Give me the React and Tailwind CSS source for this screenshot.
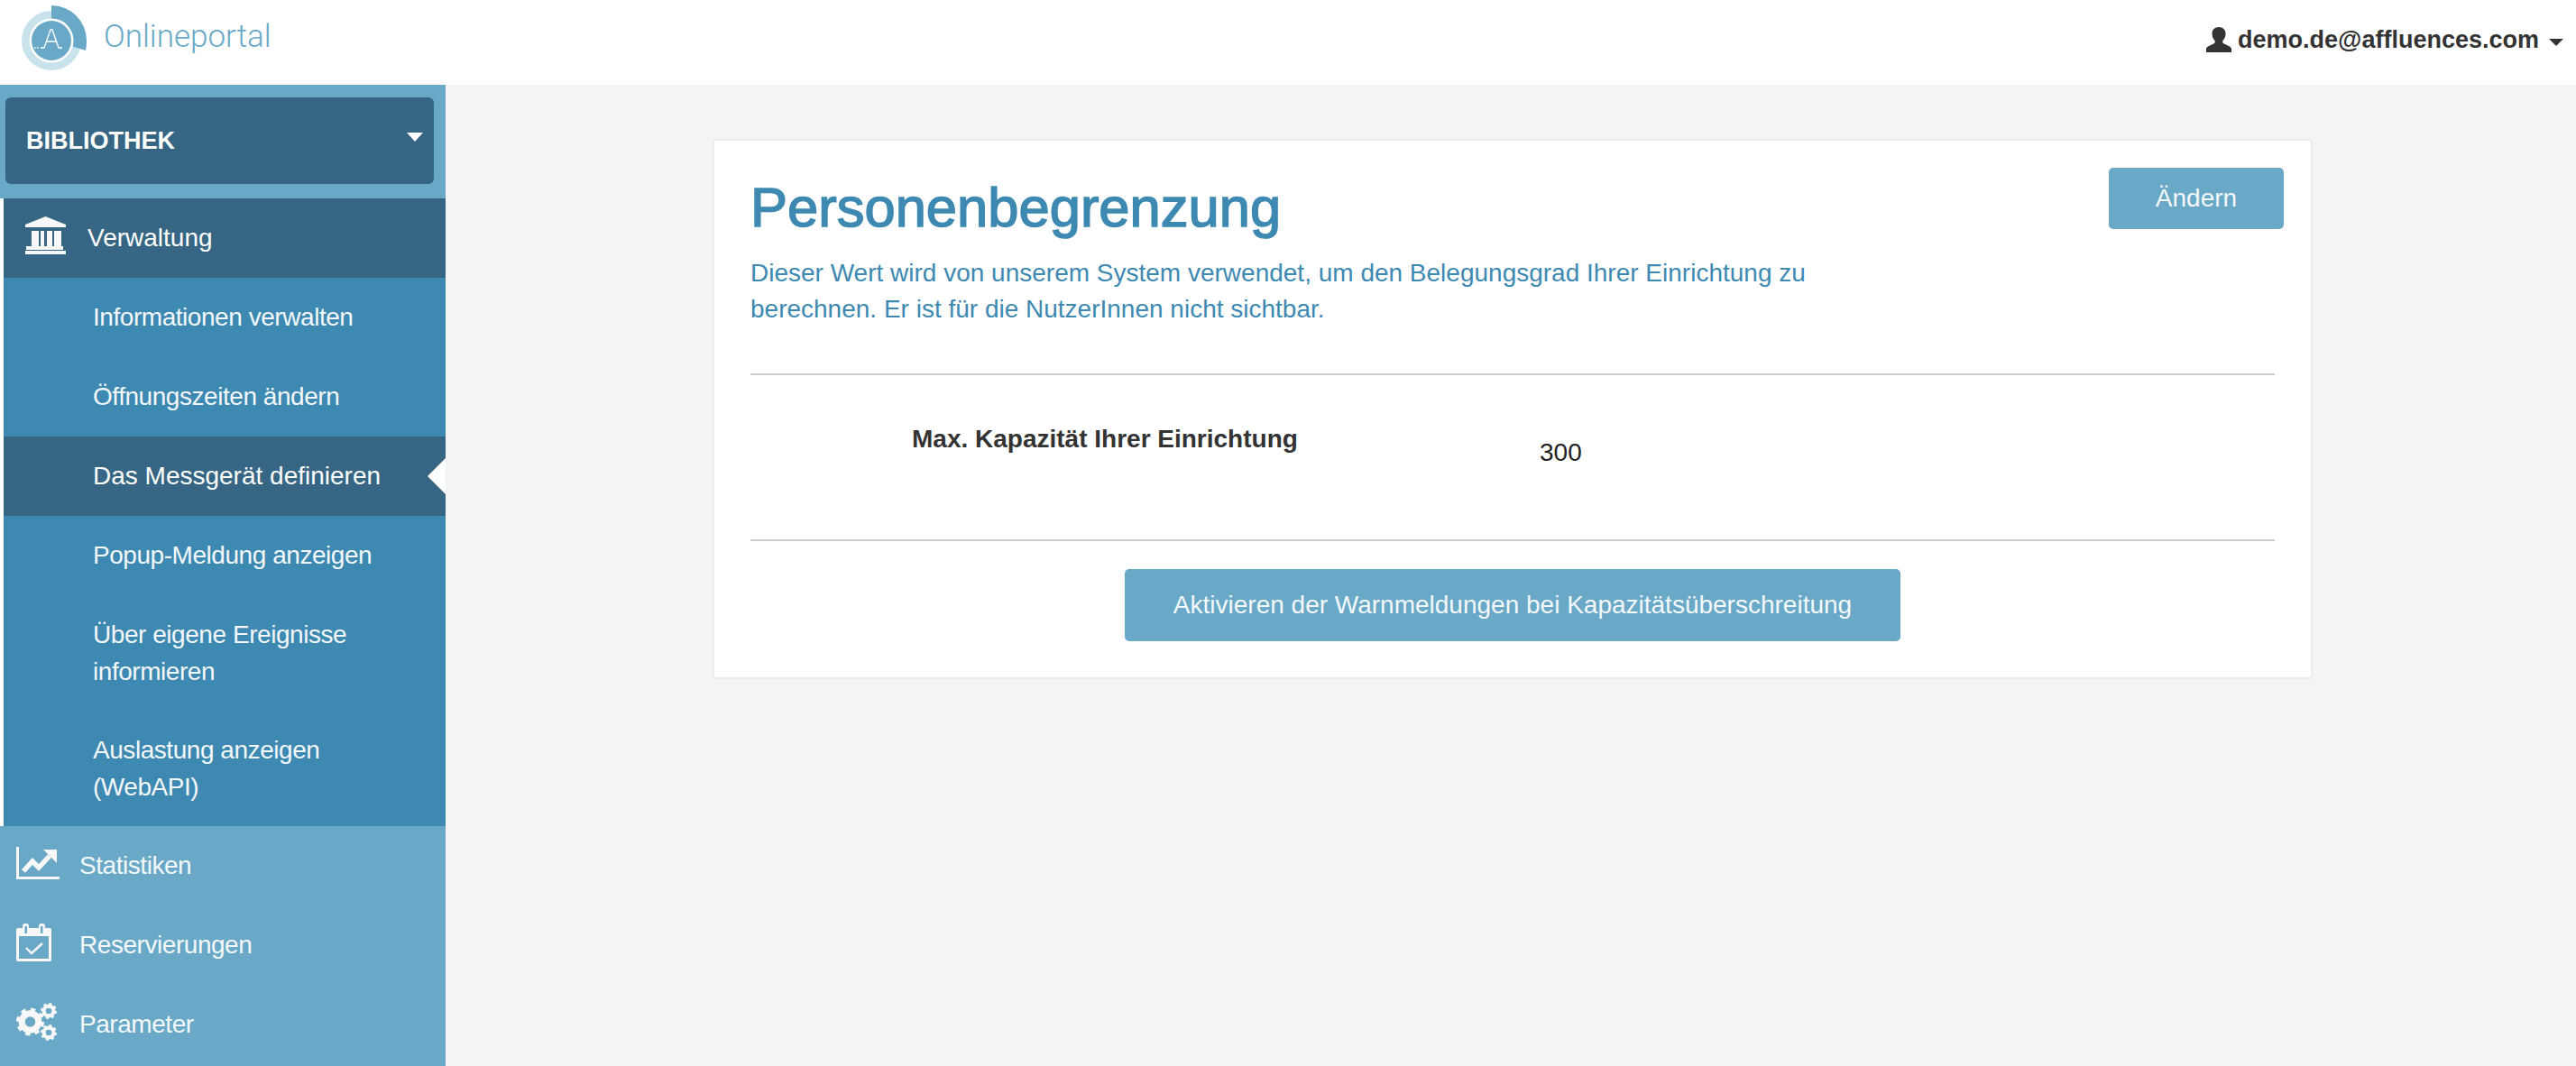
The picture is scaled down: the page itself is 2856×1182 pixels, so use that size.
const sans = "font-['Liberation_Sans',Arial,sans-serif]";
const light = "font-['Roboto',sans-serif] font-light";

function Logo() {
  return (
    <svg width="74" height="74" viewBox="0 0 74 74" className="ml-[24px] mt-[6px] shrink-0">
      <circle cx="33" cy="39" r="28.5" fill="none" stroke="#c9e3ed" strokeWidth="9" />
      <path d="M33 0 A39 39 0 0 1 72 39 Q72 45 71 50 L52 44 L33 15 Z" fill="#69a9c7" />
      <circle cx="33" cy="39" r="24.5" fill="#fff" />
      <circle cx="33" cy="39" r="22" fill="#69a9c7" />
      <path d="M21 47 H25 L32 27 H34 L41 47 H45 M27 40 H39" fill="none" stroke="#fff" strokeWidth="1.3" />
      <path d="M14 47 h1.6 M17 47 h1.6" stroke="#fff" strokeWidth="1.4" />
    </svg>
  );
}

function UserIcon() {
  return (
    <svg width="28" height="28" viewBox="0 0 28 28" className="shrink-0">
      <path d="M0 28 V24 C1 21 6 20 9 18 C10 17 10 16 9.5 15 C7.5 13 6.5 10 6.5 7 C6.5 3 9.5 0 14 0 C18.5 0 21.5 3 21.5 7 C21.5 10 20.5 13 18.5 15 C18 16 18 17 19 18 C22 20 27 21 28 24 V28 Z" fill="#333" />
    </svg>
  );
}

function BankIcon() {
  return (
    <svg width="46" height="42" viewBox="0 0 46 42" className="shrink-0">
      <path d="M22.5 0 L45 9 V12 H0 V9 Z" fill="#f8f8f8" />
      <path d="M7 16 H15 V33 H7 Z M17 16 H21 V33 H17 Z M24 16 H30 V33 H24 Z M32 16 H40 V33 H32 Z" fill="#f8f8f8" />
      <rect x="1" y="33" width="41" height="4" fill="#f8f8f8" />
      <rect x="0" y="38" width="45" height="4" fill="#f8f8f8" />
    </svg>
  );
}

function ChartIcon() {
  return (
    <svg width="48" height="36" viewBox="0 0 48 36" className="shrink-0">
      <path d="M1.5 0 V34.5 H48" fill="none" stroke="#f8f8f8" strokeWidth="3" />
      <path d="M8 27 L18 16 L25 23 L37 10" fill="none" stroke="#f8f8f8" strokeWidth="5.5" />
      <path d="M30 3 H45 V18 Z" fill="#f8f8f8" />
    </svg>
  );
}

function CalendarIcon() {
  return (
    <svg width="40" height="42" viewBox="0 0 40 42" className="shrink-0">
      <rect x="0" y="5" width="39" height="37" rx="2" fill="#f8f8f8" />
      <rect x="7" y="0" width="7" height="12" rx="3" fill="#f8f8f8" />
      <rect x="25" y="0" width="7" height="12" rx="3" fill="#f8f8f8" />
      <rect x="9.5" y="3" width="2.5" height="8" fill="#69a9c7" />
      <rect x="27" y="3" width="2.5" height="8" fill="#69a9c7" />
      <rect x="3" y="14" width="33" height="25" fill="#69a9c7" />
      <path d="M11 27 L17 33 L29 22" fill="none" stroke="#f8f8f8" strokeWidth="2.4" />
    </svg>
  );
}

function Gear({ cx, cy, r }) {
  const teethRadius = r * 0.86;
  const dash = (2 * Math.PI * teethRadius) / 16;
  return (
    <g fill="none" stroke="#f8f8f8">
      <circle cx={cx} cy={cy} r={r * 0.6} strokeWidth={r * 0.46} />
      <circle cx={cx} cy={cy} r={teethRadius} strokeWidth={r * 0.28} strokeDasharray={`${dash} ${dash}`} />
    </g>
  );
}

function GearsIcon() {
  return (
    <svg width="46" height="42" viewBox="0 0 46 42" className="shrink-0">
      <Gear cx={15.5} cy={21} r={15.5} />
      <Gear cx={36} cy={9} r={9} />
      <Gear cx={36} cy={33} r={9} />
    </svg>
  );
}

function NavItem({ children, active }) {
  return (
    <div className={`relative min-h-[88px] pl-[99px] pr-[20px] pt-[23px] pb-[23px] text-[28px] leading-[41px] ${active ? "bg-[#366683] text-white" : "tracking-[-0.45px] text-[#f4f8fa]"}`}>
      {children}
      {active && (
        <span className="absolute right-0 top-[24px] border-y-[20px] border-r-[20px] border-y-transparent border-r-white" />
      )}
    </div>
  );
}

function MenuRow({ icon, label }) {
  return (
    <div className="flex h-[88px] items-center text-[28px] tracking-[-0.45px] text-[#f4f8fa]">
      <div className="mb-[6px] ml-[18px] flex w-[70px] shrink-0 items-center">{icon}</div>
      {label}
    </div>
  );
}

export default function App() {
  return (
    <div className={`flex h-screen flex-col overflow-hidden bg-[#f4f4f4] ${sans}`}>
      <header className="flex h-[94px] shrink-0 items-start justify-between bg-white">
        <div className="flex items-start">
          <Logo />
          <span className={`ml-[17px] mt-[19px] text-[35px] leading-[44px] text-[#69a9c7] ${light}`}>Onlineportal</span>
        </div>
        <div className="mr-[14px] mt-[28px] flex items-center text-[#333]">
          <UserIcon />
          <span className="ml-[7px] text-[27px] font-bold leading-[32px]">demo.de@affluences.com</span>
          <span className="ml-[11px] mt-[6px] border-x-[8px] border-t-[8px] border-x-transparent border-t-[#333]" />
        </div>
      </header>

      <div className="flex min-h-0 flex-1">
        <aside className="w-[494px] shrink-0 bg-[#69a9c7]">
          <div className="pb-[16px] pl-[6px] pr-[13px] pt-[14px]">
            <div className="relative flex h-[96px] items-center rounded-[6px] bg-[#366683] pl-[23px] text-[27px] font-bold text-white">
              BIBLIOTHEK
              <span className="absolute right-[12px] top-[39px] border-x-[9px] border-t-[10px] border-x-transparent border-t-white" />
            </div>
          </div>

          <div className="border-l-4 border-white">
            <div className="flex h-[88px] items-center bg-[#366683] text-[28px] text-white">
              <div className="mb-[6px] ml-[24px] flex w-[69px] shrink-0 items-center"><BankIcon /></div>
              Verwaltung
            </div>
            <div className="bg-[#3d89b2]">
              <NavItem>Informationen verwalten</NavItem>
              <NavItem>Öffnungszeiten ändern</NavItem>
              <NavItem active>Das Messgerät definieren</NavItem>
              <NavItem>Popup-Meldung anzeigen</NavItem>
              <NavItem>Über eigene Ereignisse informieren</NavItem>
              <NavItem>Auslastung anzeigen (WebAPI)</NavItem>
            </div>
          </div>

          <MenuRow icon={<ChartIcon />} label="Statistiken" />
          <MenuRow icon={<CalendarIcon />} label="Reservierungen" />
          <MenuRow icon={<GearsIcon />} label="Parameter" />
        </aside>

        <main className="min-w-0 flex-1 pl-[296px] pt-[60px]">
          <section className="w-[1774px] rounded-[4px] border-2 border-[#ececec] bg-white px-[40px] pb-[40px] pt-[36px]">
            <div className="flex items-start justify-between">
              <div>
                <h1 className="text-[61.5px] font-normal leading-[76px] text-[#3d89b2] [-webkit-text-stroke:1.5px_#3d89b2]">Personenbegrenzung</h1>
                <p className="mt-[15px] w-[1220px] text-[28px] leading-[40px] text-[#3d89b2]">
                  Dieser Wert wird von unserem System verwendet, um den Belegungsgrad Ihrer Einrichtung zu berechnen. Er ist für die NutzerInnen nicht sichtbar.
                </p>
              </div>
              <button className="-mr-[10px] -mt-[6px] h-[68px] w-[194px] rounded-[5px] bg-[#69a9c7] text-[28px] text-[#f4f8fa]">Ändern</button>
            </div>

            <hr className="mt-[51px] border-t-2 border-[#cccccc]" />
            <div className="flex h-[182px] text-[28px]">
              <div className="ml-[179px] mt-[55px] w-[696px] font-bold leading-[32px] text-[#333]">Max. Kapazität Ihrer Einrichtung</div>
              <div className="mt-[70px] leading-[32px] text-[#222]">300</div>
            </div>
            <hr className="border-t-2 border-[#cccccc]" />

            <div className="mt-[31px] flex justify-center">
              <button className="h-[80px] w-[860px] rounded-[5px] bg-[#69a9c7] text-[28px] text-[#f4f8fa]">Aktivieren der Warnmeldungen bei Kapazitätsüberschreitung</button>
            </div>
          </section>
        </main>
      </div>
    </div>
  );
}
